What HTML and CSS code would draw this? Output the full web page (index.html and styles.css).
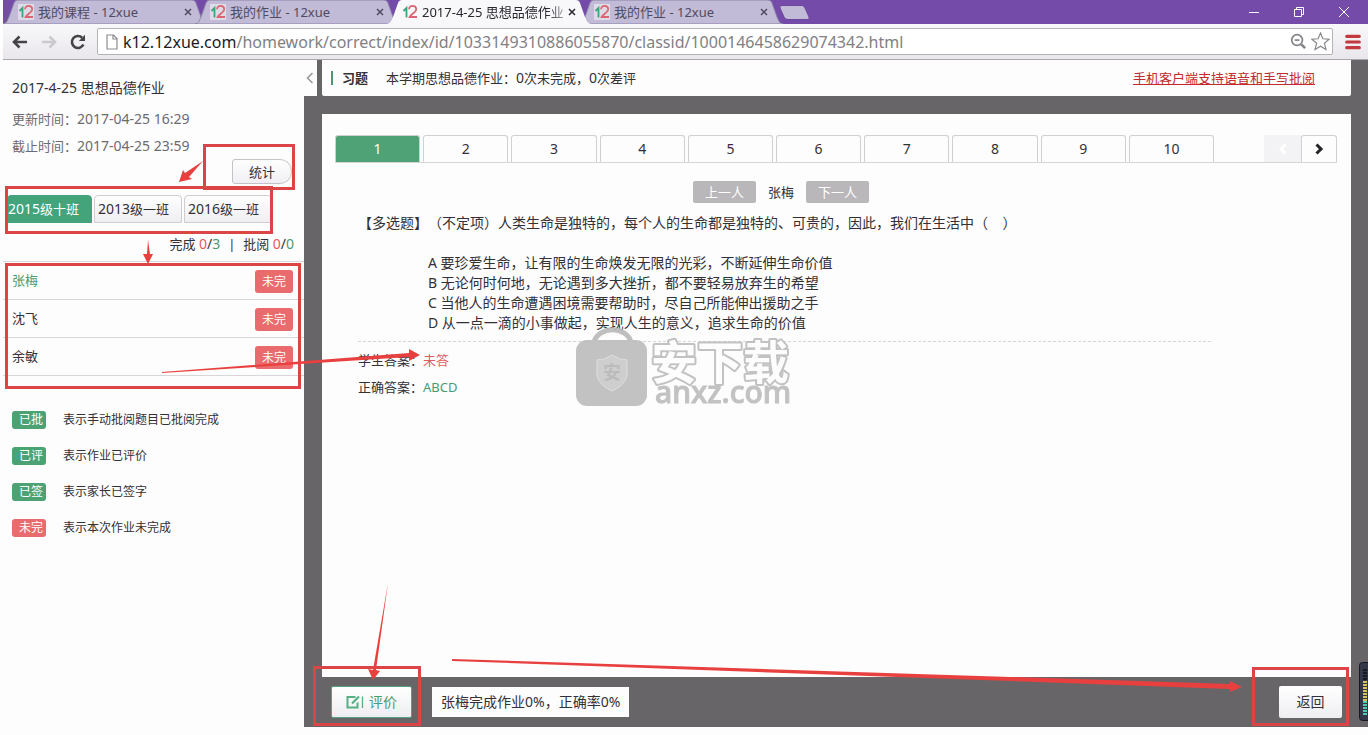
FILE: index.html
```html
<!DOCTYPE html>
<html lang="zh-CN">
<head>
<meta charset="utf-8">
<meta name="viewport" content="width=device-width, initial-scale=1">
<title>2017-4-25 思想品德作业</title>
<link rel="stylesheet" href="styles.css">
</head>
<body>
<svg class="defs" aria-hidden="true">
  <symbol id="logo" viewBox="0 0 16 16"><path d="M1.500 7 4.500 4v9.500" fill="none" stroke="#3aa57c" stroke-width="1.800"/><path d="M7 5.200C7.200 2.400 9.200 1.800 11 2c2.800.200 3.800 2.400 2.800 4.600C12.600 9 8.600 10.600 7.600 13H15" fill="none" stroke="#dd6470" stroke-width="1.800"/></symbol>
  <symbol id="tabshape" viewBox="0 0 204 24" preserveAspectRatio="none"><path d="M0 24C4 23 4 21 6 17L11 3Q12 0 15 0H189Q192 0 193 3L198 17C200 21 200 23 204 24Z"/></symbol>
  <symbol id="cross" viewBox="0 0 8 8"><path d="M1 1l6 6M7 1 1 7" fill="none" stroke="currentColor" stroke-width="1.500"/></symbol>
</svg>
<header class="browser">
  <div class="titlebar">
    <nav class="tabs" aria-label="标签页">
      <div class="tab"><svg class="shape"><use href="#tabshape"/></svg><svg class="fav"><use href="#logo"/></svg><span class="tab-title">我的课程 - 12xue</span><button class="x" aria-label="关闭"><svg><use href="#cross"/></svg></button></div>
      <div class="tab"><svg class="shape"><use href="#tabshape"/></svg><svg class="fav"><use href="#logo"/></svg><span class="tab-title">我的作业 - 12xue</span><button class="x" aria-label="关闭"><svg><use href="#cross"/></svg></button></div>
      <div class="tab current"><svg class="shape"><use href="#tabshape"/></svg><svg class="fav"><use href="#logo"/></svg><span class="tab-title">2017-4-25 思想品德作业</span><button class="x" aria-label="关闭"><svg><use href="#cross"/></svg></button></div>
      <div class="tab"><svg class="shape"><use href="#tabshape"/></svg><svg class="fav"><use href="#logo"/></svg><span class="tab-title">我的作业 - 12xue</span><button class="x" aria-label="关闭"><svg><use href="#cross"/></svg></button></div>
      <button class="newtab" aria-label="新标签页"><svg viewBox="0 0 32 15"><path d="M3 .5H23Q25 .5 26 3L30 12Q31 14.500 28 14.500H9Q6 14.500 5 12L1 3Q0 .5 3 .5Z" fill="#c1bbd8" stroke="#6b479d"/></svg></button>
    </nav>
    <div class="win">
      <button aria-label="最小化"><svg viewBox="0 0 12 12"><path d="M1 6.500H11"/></svg></button>
      <button aria-label="还原"><svg viewBox="0 0 12 12"><path d="M1.500 3.500h7v7h-7zM3.500 3V1.500h7v7H9"/></svg></button>
      <button aria-label="关闭窗口"><svg viewBox="0 0 12 12"><path d="M1 1l10 10M11 1 1 11"/></svg></button>
    </div>
  </div>
  <div class="toolbar">
    <button aria-label="后退"><svg viewBox="0 0 16 14"><path d="M15 7H2M7.500 1.500 2 7l5.500 5.500" fill="none" stroke="#464448" stroke-width="2.600"/></svg></button>
    <button aria-label="前进"><svg viewBox="0 0 16 14"><path d="M1 7h13M8.500 1.500 14 7l-5.500 5.500" fill="none" stroke="#cbc9cd" stroke-width="2.600"/></svg></button>
    <button aria-label="刷新"><svg viewBox="0 0 16 16"><path d="M13.400 10.500A6 6 0 1 1 12.200 3.800" fill="none" stroke="#464448" stroke-width="2.600"/><path d="M15 .8V7H8.800Z" fill="#464448"/></svg></button>
    <div class="address">
      <svg class="page" viewBox="0 0 12 16"><path d="M1 1h6.500L11 4.500V15H1zM7 1v4h4" fill="#fff" stroke="#8d8b90" stroke-width="1.200"/></svg>
      <div class="url" role="textbox" aria-label="地址" tabindex="0"><b>k12.12xue.com</b>/homework/correct/index/id/1033149310886055870/classid/1000146458629074342.html</div>
      <svg class="tool" viewBox="0 0 18 18"><circle cx="7.500" cy="7.500" r="5.700"/><path d="M5 7.500h5"/><path d="m12 12 4 4" stroke-width="2.800"/></svg>
      <svg class="tool star" viewBox="0 0 18 18"><path d="m9 1 2.300 5.400 5.900.5-4.500 3.800L14.200 16.500 9 13.400 3.800 16.500l1.500-5.800L.8 6.900l5.900-.5Z"/></svg>
    </div>
    <button class="menu" aria-label="菜单"><svg viewBox="0 0 14 14"><path d="M1.500 2h11M1.500 7h11M1.500 12h11" stroke="#c4393d" stroke-width="2.800" stroke-linecap="round"/></svg></button>
  </div>
</header>

<div class="app">
  <aside class="sidebar">
    <button class="collapse" aria-label="收起"><svg viewBox="0 0 8 12"><path d="M6.500 1 1.500 6l5 5" fill="none" stroke="#9a989b" stroke-width="1.600"/></svg></button>
    <h1>2017-4-25 思想品德作业</h1>
    <p class="when">更新时间：<time class="num">2017-04-25 16:29</time></p>
    <p class="when">截止时间：<time class="num">2017-04-25 23:59</time></p>
    <div class="stat-row"><button class="stat">统计</button></div>
    <div class="classes">
      <button class="class on"><span class="num">2015</span>级十班</button>
      <button class="class"><span class="num">2013</span>级一班</button>
      <button class="class"><span class="num">2016</span>级一班</button>
    </div>
    <p class="count">完成 <span class="num"><i class="red">0</i>/<i class="green">3</i></span><span class="bar">|</span>批阅 <span class="num"><i class="red">0</i>/<i class="green">0</i></span></p>
    <ul class="students">
      <li class="green">张梅<span class="badge">未完</span></li>
      <li>沈飞<span class="badge">未完</span></li>
      <li>余敏<span class="badge">未完</span></li>
    </ul>
    <dl class="legend">
      <div><dt>已批</dt><dd>表示手动批阅题目已批阅完成</dd></div>
      <div><dt>已评</dt><dd>表示作业已评价</dd></div>
      <div><dt>已签</dt><dd>表示家长已签字</dd></div>
      <div><dt class="undone">未完</dt><dd>表示本次作业未完成</dd></div>
    </dl>
  </aside>
  <main class="main">
    <section class="summary">
      <h2>习题</h2>
      <p>本学期思想品德作业：<span class="num">0</span>次未完成，<span class="num">0</span>次差评</p>
      <a href="#mobile">手机客户端支持语音和手写批阅</a>
    </section>
    <section class="panel">
      <div class="pager">
        <div class="pages">
          <button class="on">1</button><button>2</button><button>3</button><button>4</button><button>5</button><button>6</button><button>7</button><button>8</button><button>9</button><button>10</button>
        </div>
        <button class="step" disabled aria-label="上一页"><svg viewBox="0 0 10 12"><path d="M7.500 1.500 3 6l4.500 4.500"/></svg></button>
        <button class="step next" aria-label="下一页"><svg viewBox="0 0 10 12"><path d="M2.500 1.500 7 6l-4.500 4.500"/></svg></button>
      </div>
      <div class="who"><button>上一人</button><span>张梅</span><button>下一人</button></div>
      <article class="question">
        <p>【多选题】（不定项）人类生命是独特的，每个人的生命都是独特的、可贵的，因此，我们在生活中（&nbsp;&nbsp;&nbsp; ）</p>
        <ul>
          <li>A 要珍爱生命，让有限的生命焕发无限的光彩，不断延伸生命价值</li>
          <li>B 无论何时何地，无论遇到多大挫折，都不要轻易放弃生的希望</li>
          <li>C 当他人的生命遭遇困境需要帮助时，尽自己所能伸出援助之手</li>
          <li>D 从一点一滴的小事做起，实现人生的意义，追求生命的价值</li>
        </ul>
      </article>
      <p class="answer">学生答案：<span class="red">未答</span></p>
      <p class="answer">正确答案：<span class="green">ABCD</span></p>
    </section>
    <footer class="actions">
      <button class="rate"><svg viewBox="0 0 18 14"><path d="M9.500 2H1.500v10.500h10V7.500" fill="none" stroke="#56b084" stroke-width="2"/><path d="M6 8.500 13 1.500" stroke="#56b084" stroke-width="2.200"/><path d="M16.500 1.500v11.500" stroke="#56b084" stroke-width="1.300"/></svg>评价</button>
      <output>张梅完成作业0%，正确率0%</output>
      <button class="back">返回</button>
    </footer>
  </main>
</div>

<svg class="overlay" width="1368" height="735" viewBox="0 0 1368 735" aria-hidden="true">
  <g class="mark">
    <path d="M594 342a19 16 0 0 1 37 0" fill="none" stroke="#b9b9b9" stroke-width="5"/>
    <rect x="576" y="340" width="71" height="66" rx="11" fill="#bcbcbc"/>
    <path d="M612 355q7 5 15 5v16q-2 9-15 15-13-6-15-15v-16q8 0 15-5Z" fill="#cacaca" stroke="#dcdcdc"/>
    <text x="612" y="379" class="mark-small">安</text>
    <text x="651" y="379" class="mark-big">安下载</text>
    <text x="655" y="403" class="mark-url">anxz.com</text>
  </g>
  <g class="boxes">
    <rect x="204.500" y="145.500" width="89" height="43"/>
    <rect x="6.500" y="187.500" width="265" height="45"/>
    <rect x="6.500" y="264.500" width="293" height="123"/>
    <rect x="314.500" y="667.500" width="105" height="57"/>
    <rect x="1253.500" y="668.500" width="94" height="56"/>
  </g>
  <g fill="#e8403f">
    <path d="m203 161-14 16 3 2-13 3 4-12 2 3Z"/>
    <path d="m148 240 2 14h3l-5 10-5-10h4Z"/>
    <path d="m162 372 247-19v-4l11 6-11 6v-4l-247 16Z"/>
    <path d="m388 583-12 87 4 1-7 9-5-11 5 1Z"/>
    <path d="m452 659 778 25v-3l12 6-12 5v-3L452 661Z"/>
  </g>
  <g>
    <rect x="1359.500" y="662.500" width="14" height="58" rx="3" fill="#333747" stroke="#17181f"/>
    <path d="M1365 669v12" stroke="#171a20" stroke-width="4" stroke-dasharray="2 1"/>
    <path d="M1365 681v20" stroke="#d3c45d" stroke-width="4" stroke-dasharray="2 1"/>
    <path d="M1365 701v14" stroke="#52c9ac" stroke-width="4" stroke-dasharray="2 1"/>
  </g>
</svg>
</body>
</html>
```
FILE: styles.css
```css
* { box-sizing: border-box; }
body, h1, h2, p, ul, dl, dd { margin: 0; padding: 0; }
body {
  position: relative;
  min-height: 100vh;
  padding: 0 0 8px 3px;
  display: flex;
  flex-direction: column;
  overflow-x: hidden;
  background: #fdfdfd;
  color: #333036;
  font: 13px/20px "Noto Sans", "Noto Sans CJK SC", sans-serif;
  text-spacing-trim: space-all;
}
button { font: inherit; color: inherit; border: 0; padding: 0; background: none; }
svg { display: block; }
ul { list-style: none; }
i { font-style: normal; }
.defs { position: absolute; width: 0; height: 0; }
.num { font-size: 14px; }
.red { color: #e05b5e; }
.green { color: #4a9b70; }

/* Browser frame */
.titlebar { height: 24px; display: flex; justify-content: space-between; background: #744ba9; }
.tabs { display: flex; }
.tab {
  position: relative;
  width: 204px;
  height: 24px;
  padding: 0 15px;
  display: flex;
  align-items: center;
  color: #504b5e;
}
.tab + .tab { margin-left: -12px; }
.tab.current { z-index: 1; color: #29272d; }
.shape { position: absolute; left: 0; top: 0; width: 100%; height: 100%; fill: #c1bbd8; stroke: #8c83a6; }
.current .shape { fill: #f8f7fa; stroke: none; }
.fav { position: relative; width: 16px; height: 16px; background: #dedbe8; }
.current .fav { background: none; }
.tab-title { position: relative; flex: 1; margin-left: 4px; overflow: hidden; white-space: nowrap; }
.current .tab-title { mask-image: linear-gradient(90deg, #000 88%, #0006); }
.x { position: relative; margin-left: 4px; }
.x svg { width: 8px; height: 8px; }
.newtab { align-self: center; margin-left: -4px; }
.newtab svg { width: 32px; height: 15px; }
.win { display: flex; align-items: center; gap: 33px; padding-right: 18px; }
.win svg { width: 12px; height: 12px; fill: none; stroke: #fff; }
.toolbar {
  height: 36px;
  padding: 0 7px 0 9px;
  display: flex;
  align-items: center;
  gap: 13px;
  background: linear-gradient(#f8f7fa, #e9e7eb);
  border-bottom: 1px solid #a9a7ab;
}
.toolbar > button svg { width: 16px; height: 16px; }
.address {
  flex: 1;
  min-width: 0;
  height: 27px;
  margin: 0 -1px 0 -2px;
  padding: 0 2px 0 8px;
  display: flex;
  align-items: center;
  background: #fff;
  border: 1px solid #b4b2b7;
  border-radius: 2px;
}
.page { width: 12px; height: 16px; }
.url { flex: 1; margin-left: 5px; overflow: hidden; white-space: nowrap; font-size: 16px; color: #818084; }
.url b { font-weight: 400; color: #1c1b1e; }
.tool { width: 17px; height: 17px; fill: none; stroke: #858388; stroke-width: 1.800; }
.star { width: 19px; height: 19px; margin-left: 4px; stroke-width: 1.100; }

/* Page */
.app { flex: 1; display: flex; }
.sidebar { position: relative; width: 301px; flex: none; padding-top: 18px; background: #fdfdfd; }
.collapse {
  position: absolute;
  left: 301px;
  top: 0;
  width: 13px;
  height: 36px;
  padding-right: 2px;
  display: grid;
  place-items: center;
  background: #fdfdfd;
}
.collapse svg { width: 8px; height: 12px; }
.sidebar h1 { padding-left: 9px; font-size: 14px; font-weight: 400; }
.when { padding-left: 9px; margin-top: 11px; color: #6d6a70; }
.when + .when { margin-top: 7px; }
.stat-row { display: flex; justify-content: flex-end; padding: 3px 12px 0 0; }
.stat {
  width: 60px;
  height: 25px;
  border: 1px solid #c4c2c7;
  border-radius: 3px 12px 12px 3px;
  background: linear-gradient(#fefefe, #f0eff3);
}
.classes { display: flex; gap: 2px; padding: 11px 0 0 4px; }
.class {
  width: 88px;
  height: 28px;
  padding-left: 3px;
  text-align: left;
  border: 1px solid #cfcdd1;
  border-radius: 4px 4px 0 0;
  background: linear-gradient(#fefefe, #efeef2);
}
.class.on { width: 85px; padding-left: 0; background: #43a37a; border-color: #43a37a; color: #fff; }
.count { padding: 11px 10px 7px 0; text-align: right; }
.bar { margin: 0 8px; }
.students { border-top: 1px solid #d9d6da; }
.students li {
  height: 38px;
  padding: 0 11px 2px 9px;
  display: flex;
  align-items: center;
  justify-content: space-between;
  border-bottom: 1px solid #d9d6da;
}
.badge {
  width: 38px;
  margin-top: 3px;
  border-radius: 3px;
  background: #e96b6d;
  color: #fff;
  font-size: 12px;
  line-height: 23px;
  text-align: center;
}
.legend { padding: 34px 9px; display: grid; gap: 16px; font-size: 12px; }
.legend div { display: flex; align-items: center; gap: 17px; }
.legend dt {
  width: 34px;
  padding-left: 4px;
  border-radius: 3px;
  background: #4da274;
  color: #fff;
  line-height: 18px;
  text-align: center;
}
.legend .undone { background: #e96b6d; }

.main { flex: 1; min-width: 0; padding: 0 17px 0 18px; display: flex; flex-direction: column; background: #686568; }
.summary {
  height: 36px;
  padding: 0 36px 0 9px;
  display: flex;
  align-items: center;
  background: #fdfdfd;
  border-radius: 0 0 2px 2px;
}
.summary h2 { padding-left: 9px; border-left: 2px solid #4d9873; font-size: 13px; line-height: 14px; }
.summary p { margin-left: 18px; }
.summary a { margin-left: auto; color: #c22a30; }
.panel { flex: 1; margin-top: 18px; padding: 21px 14px 0 13px; background: #fdfdfd; }
.pager { display: flex; border-bottom: 1px solid #d6d6d8; }
.pages { flex: 1; margin-right: 50px; display: flex; gap: 3px; }
.pages button {
  flex: 1;
  height: 27px;
  border: 1px solid #d0d0d2;
  border-bottom: 0;
  border-radius: 3px 3px 0 0;
  font-size: 14px;
}
.pages .on { background: #4fa275; color: #fff; }
.step { width: 37px; display: grid; place-items: center; background: #f3f2f4; }
.step svg { width: 10px; height: 12px; fill: none; stroke: #fff; stroke-width: 3; }
.next { width: 36px; background: none; border: 1px solid #d0d0d2; border-bottom: 0; border-radius: 3px 3px 0 0; }
.next svg { stroke: #242328; }
.who { padding: 18px 110px 0 0; display: flex; justify-content: center; align-items: center; gap: 12px; }
.who button { width: 63px; border-radius: 2px; background: #b9b7ba; color: #fff; line-height: 22px; }
.question {
  margin: 10px 126px 0 23px;
  padding-bottom: 8px;
  border-bottom: 1px dashed #d6d5d7;
  font-size: 14px;
}
.question ul { padding: 20px 0 0 70px; }
.answer { margin: 8px 0 0 23px; }
.answer + .answer { margin-top: 7px; }
.actions { height: 50px; padding: 0 9px; display: flex; align-items: center; font-size: 14px; }
.rate, .back { height: 32px; background: linear-gradient(#fff, #eeedf1); border-radius: 2px; }
.rate {
  width: 81px;
  display: flex;
  align-items: center;
  justify-content: center;
  gap: 5px;
  border: 1px solid #54a57e;
  color: #4a9b70;
}
.rate svg { width: 18px; height: 14px; }
.actions output { margin-left: 20px; padding: 5px 9px; background: #fdfdfd; }
.back { width: 63px; margin-left: auto; }

/* Callouts drawn over the page */
.overlay { position: absolute; left: 0; top: 0; pointer-events: none; }
.boxes { fill: none; stroke: #dc4546; stroke-width: 3; }
.mark { opacity: 0.9; font-family: "Noto Sans CJK SC", sans-serif; }
.mark-small { font-size: 18px; font-weight: 700; text-anchor: middle; fill: #b4b4b4; }
.mark-big { font-size: 46px; font-weight: 700; fill: #fdfdfd; stroke: #bcbcbc; stroke-width: 4px; stroke-linejoin: round; paint-order: stroke; }
.mark-url { font-family: "Noto Sans", sans-serif; font-size: 30px; font-weight: 500; fill: #bcbcbc; stroke: #bcbcbc; stroke-width: 1px; }
```
